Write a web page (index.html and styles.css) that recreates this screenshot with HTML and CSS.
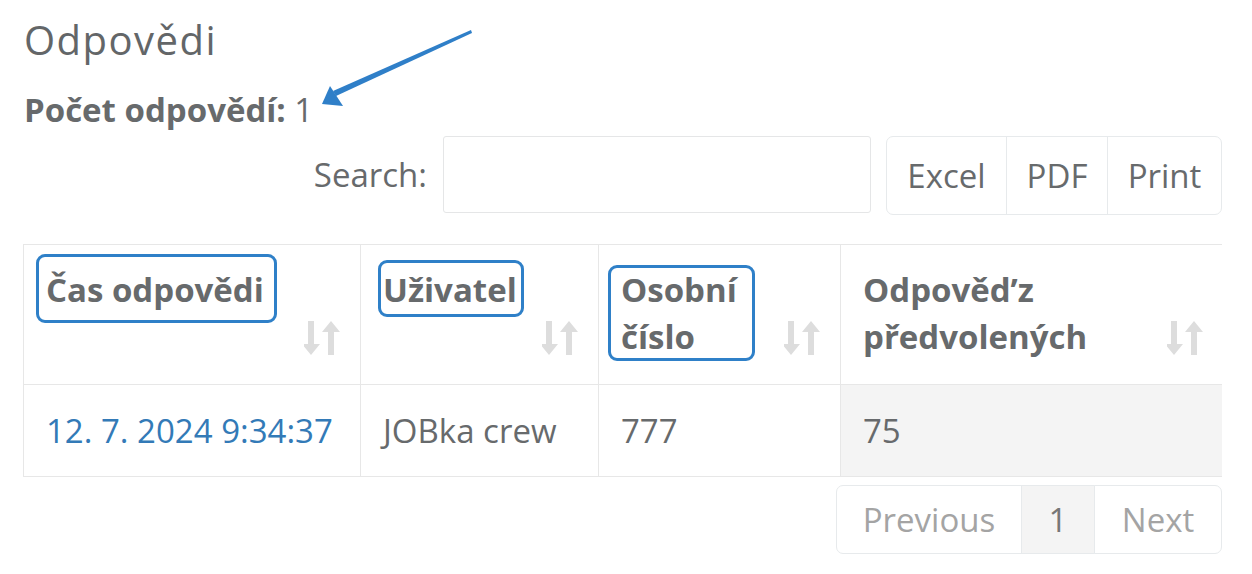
FILE: index.html
```html
<!DOCTYPE html>
<html lang="cs">
<head>
<meta charset="utf-8">
<title>Odpovědi</title>
<link rel="stylesheet" href="styles.css">
</head>
<body>
<div class="page">
  <h3 class="title">Odpovědi</h3>
  <p class="count"><b>Počet odpovědí:</b> 1</p>

  <div class="toolbar">
    <label class="search">Search: <input type="search" class="search-input"></label>
    <div class="btn-group">
      <span class="btn">Excel</span>
      <span class="btn">PDF</span>
      <span class="btn">Print</span>
    </div>
  </div>

  <div class="table-wrap">
    <table class="grid">
      <colgroup>
        <col class="c1"><col class="c2"><col class="c3"><col class="c4">
      </colgroup>
      <thead>
        <tr>
          <th><span class="th-text">Čas odpovědi</span><svg class="sort" viewBox="0 0 36 36"><path d="M4 1h6v23h6l-9 11-9-11h6z"/><path d="M24 35h6V12h6L27 1l-9 11h6z"/></svg></th>
          <th><span class="th-text">Uživatel</span><svg class="sort" viewBox="0 0 36 36"><path d="M4 1h6v23h6l-9 11-9-11h6z"/><path d="M24 35h6V12h6L27 1l-9 11h6z"/></svg></th>
          <th><span class="th-text">Osobní číslo</span><svg class="sort" viewBox="0 0 36 36"><path d="M4 1h6v23h6l-9 11-9-11h6z"/><path d="M24 35h6V12h6L27 1l-9 11h6z"/></svg></th>
          <th class="last"><span class="th-text">Odpovědʼz předvolených</span><svg class="sort" viewBox="0 0 36 36"><path d="M4 1h6v23h6l-9 11-9-11h6z"/><path d="M24 35h6V12h6L27 1l-9 11h6z"/></svg></th>
        </tr>
      </thead>
      <tbody>
        <tr>
          <td><a class="link" href="#">12. 7. 2024 9:34:37</a></td>
          <td>JOBka crew</td>
          <td>777</td>
          <td class="sorted">75</td>
        </tr>
      </tbody>
    </table>
  </div>

  <div class="pager">
    <span class="page-btn disabled">Previous</span>
    <span class="page-btn active">1</span>
    <span class="page-btn disabled">Next</span>
  </div>

  <svg class="arrow" viewBox="0 0 1252 574" aria-hidden="true">
    <polygon points="471,30 472,33 336,96 333,91" />
    <polygon points="322,104 330,86 343,106" />
  </svg>
  <div class="hl hl1"></div>
  <div class="hl hl2"></div>
  <div class="hl hl3"></div>
</div>
</body>
</html>
```

FILE: styles.css
```css
* { box-sizing: border-box; }
html, body { margin: 0; padding: 0; background: #fff; }
body {
  font-family: "Open Sans", "Noto Sans", "DejaVu Sans", sans-serif;
  font-size: 33px;
  line-height: 47px;
  color: #676a6c;
}
.page {
  position: relative;
  width: 1252px;
  height: 574px;
  padding: 0 30px 0 23px;
  overflow: hidden;
}
.title {
  margin: 15px 0 0 1px;
  font-size: 40px;
  line-height: 50px;
  font-weight: 400;
  letter-spacing: 1.5px;
  color: #636668;
}
.count {
  margin: 21px 0 0 1px;
  line-height: 47px;
}
.count b { font-weight: 700; }

.toolbar {
  display: flex;
  justify-content: flex-end;
  align-items: flex-start;
  gap: 15px;
  margin-top: 3px;
}
.search {
  display: flex;
  align-items: center;
  gap: 16px;
  height: 77px;
}
.search-input {
  width: 428px;
  height: 77px;
  border: 1px solid #e5e6e7;
  border-radius: 3px;
  background: #fff;
  font: inherit;
  outline: none;
}
.btn-group {
  display: flex;
  height: 79px;
  border: 1px solid #e7eaec;
  border-radius: 7px;
  overflow: hidden;
}
.btn {
  display: flex;
  align-items: center;
  justify-content: center;
  padding: 0 21px;
  color: #676a6c;
}
.btn + .btn { border-left: 1px solid #e7eaec; }
.btn:nth-child(1) { width: 119px; }
.btn:nth-child(2) { width: 101px; }
.btn:nth-child(3) { width: 114px; }

.table-wrap {
  margin-top: 29px;
  width: 1199px;
  overflow: hidden;
}
.grid {
  width: 1220px;
  border-collapse: collapse;
  table-layout: fixed;
}
.c1 { width: 337px; }
.c2 { width: 238px; }
.c3 { width: 242px; }
.c4 { width: 403px; }
.grid th, .grid td {
  border: 1px solid #e7e7e7;
  text-align: left;
  padding: 20px 20px 20px 22px;
}
.grid th {
  position: relative;
  vertical-align: top;
  font-weight: 700;
  height: 140px;
  padding-top: 21px;
  padding-right: 60px;
}
.grid th.last { border-right: none; }
.grid td {
  height: 92px;
  vertical-align: middle;
}
.grid td.sorted { background: #f4f4f4; }
.sort {
  position: absolute;
  right: 20px;
  bottom: 28px;
  width: 36px;
  height: 36px;
  fill: #dddddd;
}
.grid th.last .sort { right: 41px; }
.link { color: #337ab7; text-decoration: none; }

.pager {
  display: flex;
  justify-content: flex-end;
  margin-top: 8px;
}
.pager .page-btn {
  height: 69px;
  display: flex;
  align-items: center;
  justify-content: center;
  border: 1px solid #e7eaec;
  margin-left: -1px;
  background: #fff;
}
.page-btn:nth-child(1) { width: 186px; border-radius: 7px 0 0 7px; }
.page-btn:nth-child(2) { width: 74px; }
.page-btn:nth-child(3) { width: 128px; border-radius: 0 7px 7px 0; }
.page-btn.disabled { color: #a4a4a4; }
.page-btn.active { background: #f4f4f4; color: #777; }

.arrow {
  position: absolute;
  left: 0;
  top: 0;
  width: 1252px;
  height: 574px;
  fill: #2f7fc8;
  pointer-events: none;
}
.hl {
  position: absolute;
  border: 3px solid #2f80c8;
  border-radius: 9px;
}
.hl1 { left: 36px; top: 254px; width: 241px; height: 69px; }
.hl2 { left: 378px; top: 260px; width: 146px; height: 57px; }
.hl3 { left: 608px; top: 265px; width: 147px; height: 96px; }
```
